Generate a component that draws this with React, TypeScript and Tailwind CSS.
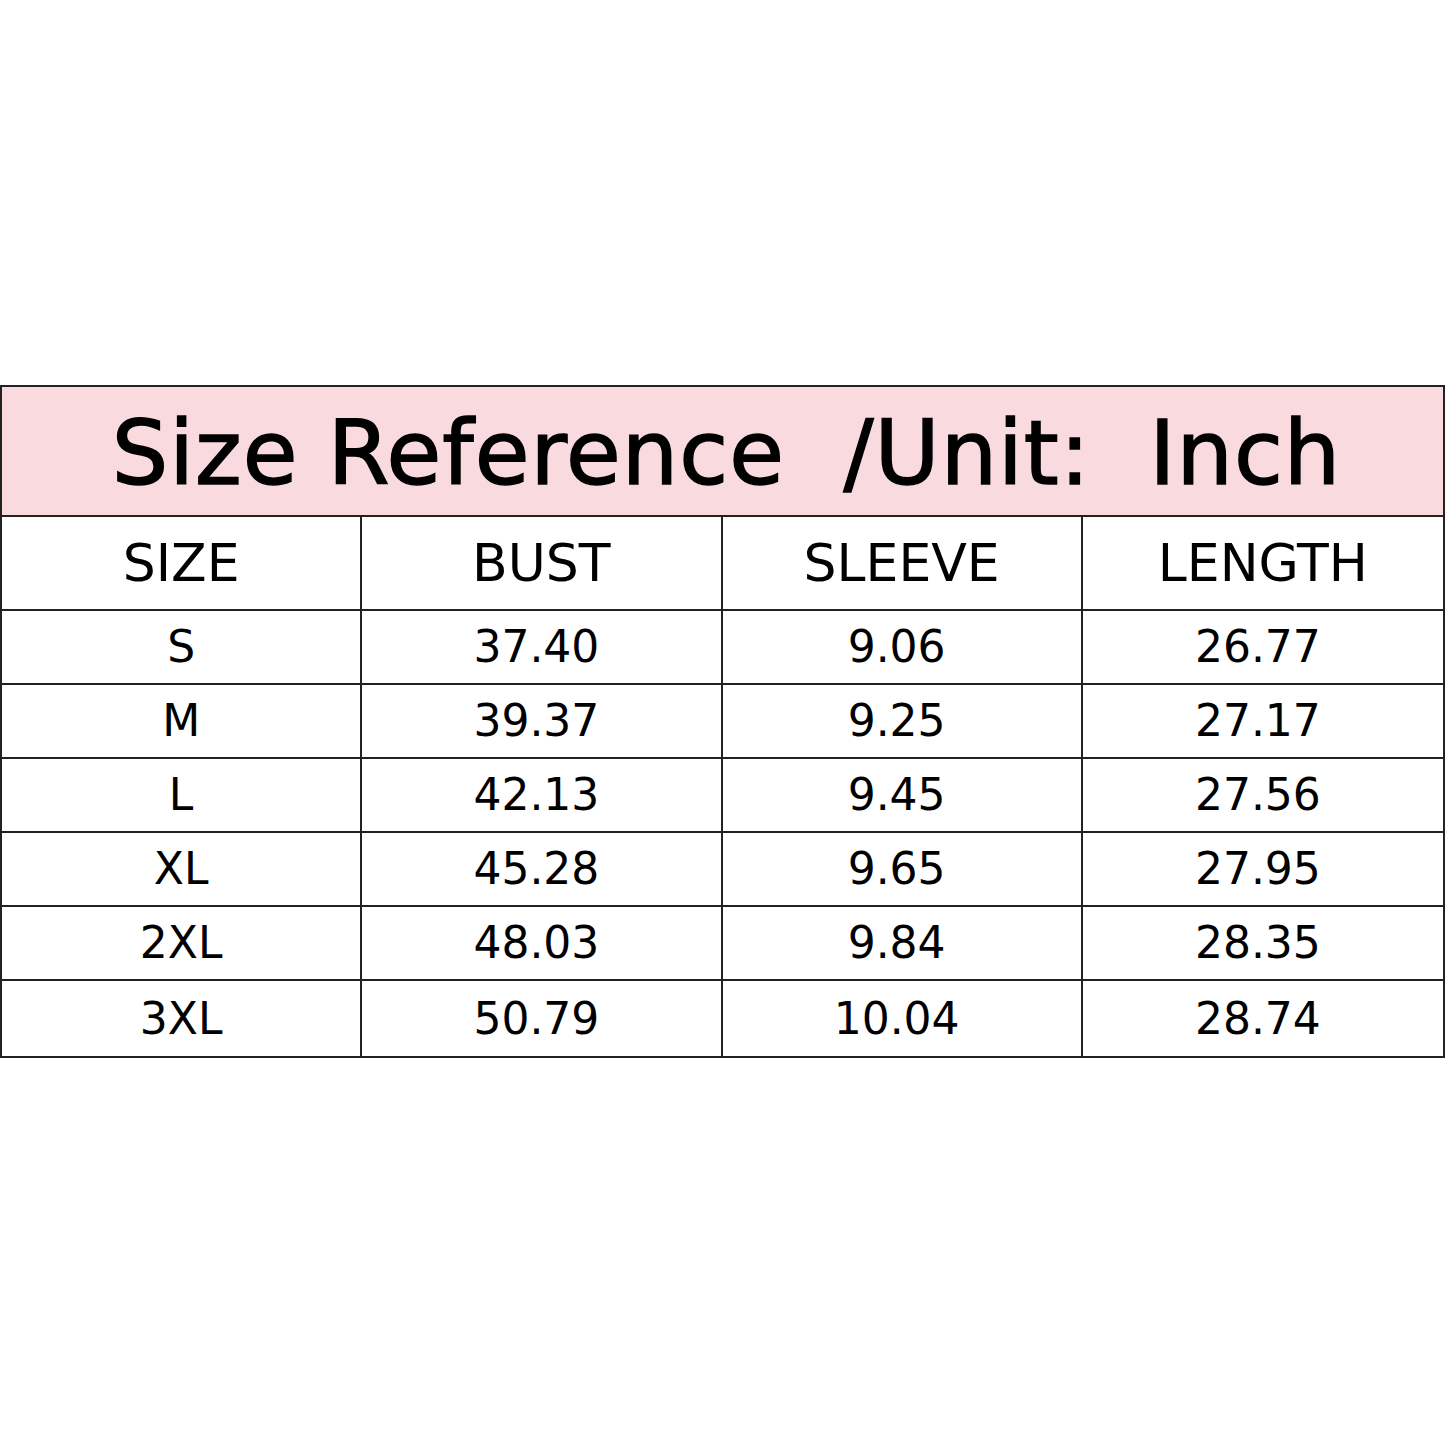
const COLS = ["SIZE", "BUST", "SLEEVE", "LENGTH"];

const ROWS: string[][] = [
  ["S", "37.40", "9.06", "26.77"],
  ["M", "39.37", "9.25", "27.17"],
  ["L", "42.13", "9.45", "27.56"],
  ["XL", "45.28", "9.65", "27.95"],
  ["2XL", "48.03", "9.84", "28.35"],
  ["3XL", "50.79", "10.04", "28.74"],
];

export default function App() {
  return (
    <div
      className="w-[1445px] h-[1445px] bg-white pt-[385px] text-black"
      style={{ fontFamily: '"Comic Sans MS", "DejaVu Sans", sans-serif' }}
    >
      <div className="border-2 border-[#222] w-[1445px]">
        <div className="h-[130px] bg-[#f9dadf] border-b-2 border-[#222] flex items-center justify-center">
          <span className="text-[89px] leading-none tracking-[1px] pl-[8px] pt-[4px] whitespace-pre [-webkit-text-stroke:1.5px_black]">
            Size Reference  /Unit:  Inch
          </span>
        </div>
        <div className="grid grid-cols-4">
          {COLS.map((c, i) => (
            <div
              key={c}
              className={
                "h-[94px] flex items-center justify-center text-[52px] border-b-2 border-[#222] " +
                (i < 3 ? "border-r-2" : "")
              }
            >
              {c}
            </div>
          ))}
          {ROWS.map((r, ri) =>
            r.map((v, i) => (
              <div
                key={ri + "-" + i}
                className={
                  "flex items-center justify-center text-[44px] border-[#222] " +
                  (ri < ROWS.length - 1 ? "h-[74px] border-b-2 " : "h-[75px] ") +
                  (i < 3 ? "border-r-2 " : "") +
                  (i > 0 ? "pr-[10px]" : "")
                }
              >
                {v}
              </div>
            ))
          )}
        </div>
      </div>
    </div>
  );
}
